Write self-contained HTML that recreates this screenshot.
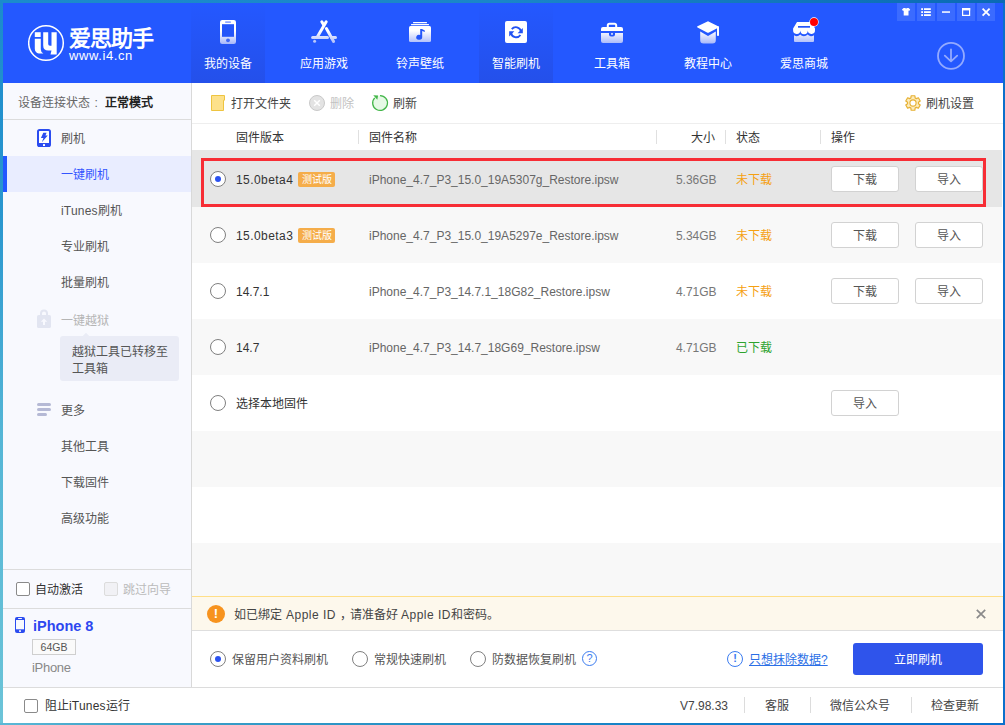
<!DOCTYPE html>
<html lang="zh-CN">
<head>
<meta charset="utf-8">
<title>i4</title>
<style>
html,body{margin:0;padding:0;}
body{width:1005px;height:725px;position:relative;overflow:hidden;background:#0b6fcb;font-family:"Liberation Sans",sans-serif;font-size:12px;color:#333;line-height:16px;}
div,span,a{box-sizing:border-box;}
.abs{position:absolute;}
.t{margin-top:1px;position:absolute;white-space:nowrap;line-height:16px;height:16px;}
#bl{left:0;top:0;width:3px;height:725px;background:linear-gradient(#1b8bcc 0%,#2a97cf 30%,#55b6d6 60%,#6cc4d8 100%);}
#bt{left:0;top:0;width:1005px;height:3px;background:linear-gradient(90deg,#1b8bcc 0%,#1a86c8 50%,#0a6ab4 100%);}
#win{left:3px;top:3px;width:1000px;height:720px;background:#fff;}
#hdr{left:0;top:0;width:1000px;height:80px;background:#2458ff;}
.tab{position:absolute;top:0;width:74px;height:80px;background:linear-gradient(#2458ff 0%,#2450ea 100%);}
.nt{position:absolute;top:53px;width:96px;text-align:center;color:#fff;font-size:12px;line-height:16px;}
.wb{position:absolute;top:0;width:18px;height:18px;background:#3b6bff;}
#side{left:0;top:80px;width:188px;height:604px;background:#f8f9fe;}
#sideb{left:188px;top:80px;width:1px;height:604px;background:#d9d9d9;}
.si{margin-top:1px;position:absolute;left:58px;color:#555;font-size:12px;line-height:16px;white-space:nowrap;}
.hl{position:absolute;left:0;width:188px;height:1px;background:#dcdcdc;}
.row{position:absolute;left:189px;width:810px;}
.cell{margin-top:1px;position:absolute;white-space:nowrap;line-height:16px;font-size:12px;}
.radio{position:absolute;width:16px;height:16px;border-radius:50%;border:1px solid #808080;background:#fff;}
.radio.on::after{content:"";position:absolute;left:4px;top:4px;width:6px;height:6px;border-radius:50%;background:#2b52f0;}
.btn{position:absolute;width:68px;height:26px;border:1px solid #d2d2d2;border-radius:3px;background:#fff;color:#555;text-align:center;line-height:26px;font-size:12px;}
.tag{position:absolute;height:14.5px;width:37px;background:#f5ad4a;color:#fff;border-radius:2px;font-size:10px;line-height:16px;text-align:center;}
.vs{position:absolute;width:1px;background:#e0e0e0;}
.cb{position:absolute;width:14px;height:14px;border:1px solid #8a8a8a;border-radius:2px;background:#fff;}
</style>
</head>
<body>
<div id="bl" class="abs"></div>
<div id="bt" class="abs"></div>
<div class="abs" style="left:0;top:723px;width:1005px;height:2px;background:linear-gradient(90deg,#5cb9d7 0%,#3fa3c8 12%,#1e8ac4 50%,#0b76cc 85%,#0b70cc 100%)"></div>
<div id="win" class="abs">
  <div id="hdr" class="abs">
    <!-- tabs -->
    <div class="tab" style="left:188px"></div>
    <div class="tab" style="left:476px"></div>
    <!-- logo -->
    <svg class="abs" style="left:25px;top:21px" width="38" height="38" viewBox="0 0 38 38">
      <circle cx="18" cy="19" r="17.3" fill="none" stroke="#fff" stroke-width="1.5"/>
      <path d="M6.8 8.2h5.9v4.8h-5.900z" fill="#fff"/>
      <path d="M6.800 14.8h6v10.4q0 3.2 2.6 4.4h-4.600q-4 -0.800 -4 -5z" fill="#fff"/>
      <path d="M15.2 8.2h5v11.8q0 1.800 1.800 1.8h1.500v-13.6h5.2v22.2h-6.2l1 -4h-3.300q-5 0 -5 -5z" fill="#fff"/>
    </svg>
    <div class="t" style="left:66px;top:22px;font-size:22px;line-height:26px;height:26px;color:#fff;font-weight:bold;letter-spacing:-1px">爱思助手</div>
    <div class="t" style="left:66px;top:44px;font-size:13px;color:#fff;letter-spacing:0.6px">www.i4.cn</div>
    <!-- nav text -->
    <div class="nt" style="left:177px">我的设备</div>
    <div class="nt" style="left:273px">应用游戏</div>
    <div class="nt" style="left:369px">铃声壁纸</div>
    <div class="nt" style="left:465px">智能刷机</div>
    <div class="nt" style="left:561px">工具箱</div>
    <div class="nt" style="left:657px">教程中心</div>
    <div class="nt" style="left:753px">爱思商城</div>

    <svg class="abs" style="left:0;top:0" width="1000" height="80" viewBox="3 3 1000 80">
      <defs>
        <linearGradient id="g" x1="0" y1="0" x2="0" y2="1" gradientUnits="userSpaceOnUse" >
          <stop offset="0" stop-color="#fff"/><stop offset="0.4" stop-color="#fff"/><stop offset="1" stop-color="#a9b9fa"/>
        </linearGradient>
        <linearGradient id="gv" x1="0" y1="20" x2="0" y2="44" gradientUnits="userSpaceOnUse">
          <stop offset="0" stop-color="#fff"/><stop offset="0.45" stop-color="#fff"/><stop offset="1" stop-color="#a6b7fa"/>
        </linearGradient>
      </defs>
      <!-- phone -->
      <rect x="220" y="20" width="16" height="24" rx="2.2" fill="url(#gv)"/>
      <rect x="222" y="24.2" width="12" height="12.6" fill="#2456fa"/>
      <rect x="225" y="21.3" width="6" height="1.7" rx="0.8" fill="#8fa7ff"/>
      <circle cx="228" cy="40.3" r="1.9" fill="#3f68f6"/>
      <!-- appstore -->
      <g stroke="url(#gv)" stroke-width="3" stroke-linecap="round" fill="none">
        <path d="M326.2 21.8L317.6 36.4"/>
        <path d="M321.8 21.8L323.6 24.8"/>
        <path d="M326.4 28.6L333.6 41.4"/>
        <path d="M312.6 37.6H327.5"/>
        <path d="M331.5 37.6H335.5"/>
      </g>
      <circle cx="314.6" cy="41.3" r="1.5" fill="#b9c7fb"/>
      <!-- music -->
      <rect x="413" y="22" width="14" height="1.2" rx="0.5" fill="#fff"/>
      <rect x="411" y="24" width="18" height="1.2" rx="0.5" fill="#fff"/>
      <rect x="409" y="26" width="22" height="16" rx="1.5" fill="url(#gv)"/>
      <path d="M420.2 29h1.8l2.8 1.6v1.4l-2.6-1v6.2a3 2.4 0 1 1 -2-2.2z" fill="#2456fa"/>
      <!-- refresh -->
      <rect x="505" y="21" width="22" height="22" rx="2" fill="#fff"/>
      <g fill="none" stroke="#2152f3" stroke-width="1.9">
        <path d="M511.8 29.2A5.2 5.2 0 0 1 521 31.4"/>
        <path d="M520.4 35A5.2 5.2 0 0 1 511 33"/>
      </g>
      <path d="M522.8 28v5.2h-5.2z" fill="#2152f3"/>
      <path d="M509.2 36.4v-5.2h5.2z" fill="#2152f3"/>
      <!-- toolbox -->
      <path d="M607.8 27v-1.6a1.6 1.6 0 0 1 1.6-1.6h5.2a1.6 1.6 0 0 1 1.6 1.6V27" fill="none" stroke="#fff" stroke-width="2"/>
      <path d="M601 31v-2a2 2 0 0 1 2-2h18a2 2 0 0 1 2 2v2z" fill="#fff"/>
      <path d="M601 33h22v8a2 2 0 0 1 -2 2h-18a2 2 0 0 1 -2-2z" fill="url(#gv)"/>
      <path d="M609 31h6v3.5a2 2 0 0 1 -2 2h-2a2 2 0 0 1 -2-2z" fill="#2456fa"/>
      <rect x="611.2" y="33" width="1.6" height="1.8" rx="0.5" fill="#fff"/>
      <!-- cap -->
      <path d="M700.2 31.5v8.7a3.3 3.3 0 0 0 3.3 3.3h9a3.3 3.3 0 0 0 3.3-3.3v-8.7l-7.8 4.4z" fill="url(#gv)"/>
      <path d="M708 21.2l10.6 5.2a0.6 0.6 0 0 1 0 1l-10.1 5.3a1 1 0 0 1 -1 0l-10-5.2a0.7 0.7 0 0 1 0-1.2z" fill="#fff"/>
      <rect x="717" y="26.5" width="2" height="9.3" fill="#fff"/>
      <!-- store -->
      <path d="M797 22h14.5l3.5 6.5v1.5a3.6 3.6 0 0 1 -7.2 0.6a3.7 3.7 0 0 1 -7.4 0a3.6 3.6 0 0 1 -7.3 -0.6v-1.5z" fill="#fff"/>
      <rect x="798" y="26" width="12" height="1.7" fill="#2456fa"/>
      <path d="M794 35.2a4.6 4.6 0 0 0 6.2-0.6a4.8 4.8 0 0 0 7.4 0a4.6 4.6 0 0 0 6.4 0.6v5.8a1 1 0 0 1 -1 1h-18a1 1 0 0 1 -1-1z" fill="url(#gv)"/>
      <circle cx="814" cy="22" r="4.7" fill="#fff"/>
      <circle cx="814" cy="22" r="4" fill="#ff0000"/>
    </svg>
    <!-- window buttons -->
    <div class="wb" style="left:894px"></div>
    <div class="wb" style="left:914px"></div>
    <div class="wb" style="left:934px"></div>
    <div class="wb" style="left:954px"></div>
    <div class="wb" style="left:974px"></div>

    <svg class="abs" style="left:894px;top:0" width="98" height="18" viewBox="897 3 98 18">
      <g fill="#fff">
        <path d="M903.6 8h1.7a1 1 0 0 0 1.6 0h1.7l1.6 1.6-1 1.4-.7-.5v5.1h-4.8v-5.1l-.7.5-1-1.4z"/>
        <rect x="921.2" y="8.2" width="1.8" height="1.8"/><rect x="924" y="8.2" width="6.8" height="1.8"/>
        <rect x="921.2" y="11.2" width="1.8" height="1.8"/><rect x="924" y="11.2" width="6.8" height="1.8"/>
        <rect x="921.2" y="14.2" width="1.8" height="1.8"/><rect x="924" y="14.2" width="6.8" height="1.8"/>
        <rect x="942" y="11.3" width="8" height="1.5"/>
      </g>
      <rect x="962.6" y="8.6" width="7" height="6.8" fill="none" stroke="#fff" stroke-width="1.2"/>
      <rect x="962" y="8" width="8.2" height="2.4" fill="#fff"/>
      <path d="M982.6 8.6l7 7M989.6 8.6l-7 7" stroke="#fff" stroke-width="1.8" fill="none"/>
    </svg>
    <svg class="abs" style="left:933px;top:38px" width="30" height="30" viewBox="936 41 30 30">
      <circle cx="951" cy="55.9" r="13" fill="none" stroke="#93aaff" stroke-width="1.8"/>
      <path d="M951 49.300V61M944.800 55.600l6.200 5.800 6.200-5.800" fill="none" stroke="#93aaff" stroke-width="1.8" stroke-linecap="round" stroke-linejoin="round"/>
    </svg>
  </div>

  <!-- SIDEBAR -->
  <div id="side" class="abs">
    <div class="t" style="left:15px;top:11px;color:#666">设备连接状态<span style="margin-left:4.500px">:</span></div>
    <div class="t" style="left:102px;top:11px;color:#222;font-weight:bold">正常模式</div>
    <div class="hl" style="top:36px"></div>
    <div class="abs" style="left:0;top:73px;width:188px;height:36px;background:#e9edff"></div>
    <div class="abs" style="left:0;top:73px;width:4px;height:36px;background:#2458ff"></div>
    <div class="si" style="top:47px">刷机</div>
    <div class="si" style="top:83px;color:#3355ff">一键刷机</div>
    <div class="si" style="top:119px"><span style="letter-spacing:0.2px">iTunes</span>刷机</div>
    <div class="si" style="top:155px">专业刷机</div>
    <div class="si" style="top:191px">批量刷机</div>
    <div class="si" style="top:229px;color:#b5b5b5">一键越狱</div>
    <div class="abs" style="left:57px;top:253px;width:119px;height:45px;background:#eaecf6;border-radius:3px"></div>
    <div class="abs" style="left:79.5px;top:250.5px;width:6px;height:6px;background:#eaecf6;transform:rotate(45deg)"></div>
    <div class="t" style="left:69px;top:260px;color:#555">越狱工具已转移至</div>
    <div class="t" style="left:69px;top:277px;color:#555">工具箱</div>
    <div class="si" style="top:319px">更多</div>
    <div class="si" style="top:355px">其他工具</div>
    <div class="si" style="top:391px">下载固件</div>
    <div class="si" style="top:427px">高级功能</div>

    <svg class="abs" style="left:0;top:0" width="188" height="604" viewBox="3 83 188 604">
      <!-- flash -->
      <rect x="38" y="130" width="12" height="16" rx="1.6" fill="#fff" stroke="#2b4cf0" stroke-width="2"/>
      <rect x="38" y="143" width="12" height="3.5" fill="#2b4cf0"/>
      <rect x="43" y="144.1" width="2" height="1.9" fill="#fff"/>
      <path d="M43.4 133.4h2.8l-1 2.4h2l-5 5.8 1.3-3.7h-2.1z" fill="#2b4cf0" transform="translate(44 137.3) scale(1.18) translate(-44 -137.3)"/>
      <!-- lock -->
      <path d="M41 315.5v-2a3 3 0 0 1 6 0v2" fill="none" stroke="#e2e5f1" stroke-width="2"/>
      <rect x="37" y="315" width="14" height="13" rx="1.6" fill="#e2e5f1"/>
      <path d="M44 318.4l3.2 3.3h-2.2v3.3h-2v-3.3h-2.2z" fill="#f8f9fe"/>
      <!-- more -->
      <rect x="37" y="403" width="14" height="3" rx="1.5" fill="#b5b9d5"/>
      <rect x="37" y="408" width="14" height="3" rx="1.5" fill="#b5b9d5"/>
      <rect x="37" y="413" width="10" height="3" rx="1.5" fill="#b5b9d5"/>
      <!-- phone small -->
      <rect x="15" y="617" width="10" height="16" rx="2" fill="#2b4cf0"/>
      <rect x="16" y="620" width="8" height="9.3" fill="#f8f9fe"/>
      <rect x="18" y="618.1" width="4" height="1" rx="0.5" fill="#f8f9fe"/>
      <rect x="19" y="630.2" width="2" height="1.8" fill="#dfe4fb"/>
    </svg>
    <div class="hl" style="top:486px"></div>
    <div class="cb" style="left:13px;top:499px"></div>
    <div class="t" style="left:32px;top:498px;color:#333">自动激活</div>
    <div class="cb" style="left:101px;top:499px;border-color:#dcdcdc;background:#f1f1f5"></div>
    <div class="t" style="left:120px;top:498px;color:#bbb">跳过向导</div>
    <div class="hl" style="top:525px"></div>
    <div class="t" style="left:30px;top:533px;font-size:14.5px;line-height:18px;height:18px;font-weight:bold;color:#2d47f0">iPhone 8</div>
    <div class="abs" style="left:29px;top:556px;width:44px;height:16px;border:1px solid #cfcfcf;background:#fafafa;font-size:10.5px;line-height:14px;text-align:center;color:#555">64GB</div>
    <div class="t" style="left:29px;top:576px;color:#888;font-size:13px;letter-spacing:-0.3px">iPhone</div>
  </div>
  <div id="sideb" class="abs"></div>

  <!-- MAIN -->
  <div class="abs" style="left:189px;top:80px;width:811px;height:40px;background:#fff"></div>
  <div class="abs" style="left:189px;top:120px;width:811px;height:1px;background:#eeeeee"></div>
  <!-- toolbar -->
  <div class="t" style="left:228px;top:92px;color:#444">打开文件夹</div>
  <div class="t" style="left:327px;top:92px;color:#c2c2c2">删除</div>
  <div class="t" style="left:390px;top:92px;color:#444">刷新</div>
  <div class="t" style="left:923px;top:92px;color:#444">刷机设置</div>

  <svg class="abs" style="left:189px;top:80px" width="811" height="40" viewBox="192 83 811 40">
    <!-- folder -->
    <path d="M211.5 95.5h13v4.7h-1v10.3h-12z" fill="#fde18b" stroke="#eec440" stroke-width="1"/>
    <!-- delete -->
    <circle cx="317" cy="103" r="7.5" fill="#e3e3e3" stroke="#c9c9c9" stroke-width="1"/>
    <path d="M314.2 100.2l5.6 5.6M319.8 100.2l-5.6 5.6" stroke="#fff" stroke-width="1.5" fill="none"/>
    <!-- refresh -->
    <circle cx="380" cy="103" r="7.4" fill="#e6f9e6"/>
    <path d="M380 95.6A7.4 7.4 0 1 1 374.7 97.9" fill="none" stroke="#43b649" stroke-width="1.3"/>
    <path d="M373.3 95.2l4.8 0.4-0.8 4.2z" fill="#43b649"/>
    <!-- gear -->
    <g transform="translate(913 103)">
      <path d="M-2.14 -5.07 L-1.86 -7.27 L1.86 -7.27 L2.14 -5.07 L3.32 -4.39 L5.37 -5.24 L7.22 -2.03 L5.46 -0.68 L5.46 0.68 L7.22 2.03 L5.37 5.24 L3.32 4.39 L2.14 5.07 L1.86 7.27 L-1.86 7.27 L-2.14 5.07 L-3.32 4.39 L-5.37 5.24 L-7.22 2.03 L-5.46 0.68 L-5.46 -0.68 L-7.22 -2.03 L-5.37 -5.24 L-3.32 -4.39Z" fill="#fdebbb" stroke="#e6b133" stroke-width="1.2" stroke-linejoin="round"/>
      <circle r="3.1" fill="#fff" stroke="#e6b133" stroke-width="1.1"/>
    </g>
  </svg>
  <!-- table header -->
  <div class="t" style="left:233px;top:126px;color:#333">固件版本</div>
  <div class="t" style="left:366px;top:126px;color:#333">固件名称</div>
  <div class="t" style="left:688px;top:126px;color:#333">大小</div>
  <div class="t" style="left:733px;top:126px;color:#333">状态</div>
  <div class="t" style="left:828px;top:126px;color:#333">操作</div>
  <div class="vs" style="left:355px;top:127px;height:14px"></div>
  <div class="vs" style="left:653px;top:127px;height:14px"></div>
  <div class="vs" style="left:722px;top:127px;height:14px"></div>
  <div class="vs" style="left:817px;top:127px;height:14px"></div>

  <!-- rows -->
  <div class="row" style="top:147px;height:57px;background:#e6e6e6"></div>
  <div class="row" style="top:204px;height:56px;background:#f8f8f8"></div>
  <div class="row" style="top:260px;height:56px;background:#fff"></div>
  <div class="row" style="top:316px;height:56px;background:#f8f8f8"></div>
  <div class="row" style="top:372px;height:56px;background:#fff"></div>
  <div class="row" style="top:428px;height:56px;background:#f8f8f8"></div>
  <div class="row" style="top:484px;height:56px;background:#fff"></div>
  <div class="row" style="top:540px;height:53px;background:#f8f8f8"></div>
  <div class="abs" style="left:198px;top:155px;width:785px;height:49px;border:3px solid #f72d35"></div>

  <!-- row 1 -->
  <div class="radio on" style="left:207px;top:168px"></div>
  <div class="cell" style="left:233px;top:168px;color:#333;letter-spacing:0.43px">15.0beta4</div>
  <div class="tag" style="left:295px;top:169px">测试版</div>
  <div class="cell" style="left:366px;top:168px;color:#666">iPhone_4.7_P3_15.0_19A5307g_Restore.ipsw</div>
  <div class="cell" style="right:286.4px;top:168px;color:#777">5.36GB</div>
  <div class="cell" style="left:733px;top:168px;color:#f5a012">未下载</div>
  <div class="btn" style="left:828px;top:163px">下载</div>
  <div class="btn" style="left:912px;top:163px">导入</div>
  <!-- row 2 -->
  <div class="radio" style="left:207px;top:224px"></div>
  <div class="cell" style="left:233px;top:224px;color:#333;letter-spacing:0.43px">15.0beta3</div>
  <div class="tag" style="left:295px;top:225px">测试版</div>
  <div class="cell" style="left:366px;top:224px;color:#666">iPhone_4.7_P3_15.0_19A5297e_Restore.ipsw</div>
  <div class="cell" style="right:286.4px;top:224px;color:#777">5.34GB</div>
  <div class="cell" style="left:733px;top:224px;color:#f5a012">未下载</div>
  <div class="btn" style="left:828px;top:219px">下载</div>
  <div class="btn" style="left:912px;top:219px">导入</div>
  <!-- row 3 -->
  <div class="radio" style="left:207px;top:280px"></div>
  <div class="cell" style="left:233px;top:280px;color:#333">14.7.1</div>
  <div class="cell" style="left:366px;top:280px;color:#666">iPhone_4.7_P3_14.7.1_18G82_Restore.ipsw</div>
  <div class="cell" style="right:286.4px;top:280px;color:#777">4.71GB</div>
  <div class="cell" style="left:733px;top:280px;color:#f5a012">未下载</div>
  <div class="btn" style="left:828px;top:275px">下载</div>
  <div class="btn" style="left:912px;top:275px">导入</div>
  <!-- row 4 -->
  <div class="radio" style="left:207px;top:336px"></div>
  <div class="cell" style="left:233px;top:336px;color:#333">14.7</div>
  <div class="cell" style="left:366px;top:336px;color:#666">iPhone_4.7_P3_14.7_18G69_Restore.ipsw</div>
  <div class="cell" style="right:286.4px;top:336px;color:#777">4.71GB</div>
  <div class="cell" style="left:733px;top:336px;color:#2da32d">已下载</div>
  <!-- row 5 -->
  <div class="radio" style="left:207px;top:392px"></div>
  <div class="cell" style="left:233px;top:392px;color:#333">选择本地固件</div>
  <div class="btn" style="left:828px;top:387px">导入</div>

  <!-- notice -->
  <div class="abs" style="left:189px;top:593px;width:811px;height:1px;background:#ffdf88"></div>
  <div class="abs" style="left:189px;top:594px;width:811px;height:33px;background:#fdf8ec"></div>
  <div class="abs" style="left:189px;top:627px;width:811px;height:1px;background:#dedede"></div>
  <div class="abs" style="left:204px;top:602px;width:18px;height:18px;border-radius:50%;background:#f7931e;color:#fff;font-weight:bold;font-size:13px;line-height:18px;text-align:center">!</div>
  <div class="t" style="left:231px;top:603px;color:#444">如已绑定</div>
  <div class="t" style="left:283px;top:603px;color:#444;letter-spacing:0.5px">Apple ID</div>
  <div class="t" style="left:336.5px;top:603px;color:#444">，</div>
  <div class="t" style="left:346.5px;top:603px;color:#444">请准备好</div>
  <div class="t" style="left:398px;top:603px;color:#444;letter-spacing:0.5px">Apple ID</div>
  <div class="t" style="left:447.5px;top:603px;color:#444">和密码。</div>

  <svg class="abs" style="left:972px;top:605px" width="12" height="12" viewBox="0 0 12 12"><path d="M1.8 1.8l8.4 8.4M10.2 1.8l-8.4 8.4" stroke="#8a8a8a" stroke-width="1.7" fill="none"/></svg>

  <!-- options -->
  <div class="radio on" style="left:207px;top:648px"></div>
  <div class="t" style="left:229px;top:648px;color:#555">保留用户资料刷机</div>
  <div class="radio" style="left:349px;top:648px"></div>
  <div class="t" style="left:371px;top:648px;color:#555">常规快速刷机</div>
  <div class="radio" style="left:467px;top:648px"></div>
  <div class="t" style="left:489px;top:648px;color:#555">防数据恢复刷机</div>

  <div class="abs" style="left:579px;top:648px;width:15px;height:15px;border:1.4px solid #3b7cf0;border-radius:50%;color:#3b7cf0;font-size:11px;line-height:12.5px;text-align:center">?</div>
  <div class="abs" style="left:724px;top:648px;width:16px;height:16px;border:1.5px solid #3b7cf0;border-radius:50%;color:#3b7cf0;font-size:11px;font-weight:bold;line-height:13px;text-align:center">!</div>
  <div class="t" style="left:746px;top:648px;color:#2b6fe6;text-decoration:underline">只想抹除数据?</div>
  <div class="abs" style="left:850px;top:640px;width:130px;height:32px;border-radius:3px;background:#2f54eb;color:#fff;text-align:center;line-height:34px;font-size:12px">立即刷机</div>

  <!-- footer -->
  <div class="abs" style="left:0;top:684px;width:1000px;height:1px;background:#dcdcdc"></div>
  <div class="cb" style="left:21px;top:696px"></div>
  <div class="t" style="left:42px;top:694px;color:#333">阻止<span style="letter-spacing:0.2px">iTunes</span>运行</div>
  <div class="t" style="left:677px;top:694px;color:#444">V7.98.33</div>
  <div class="t" style="left:762px;top:694px;color:#444">客服</div>
  <div class="t" style="left:827px;top:694px;color:#444">微信公众号</div>
  <div class="t" style="left:928px;top:694px;color:#444">检查更新</div>
  <div class="vs" style="left:741px;top:694px;height:16px;background:#dcdcdc"></div>
  <div class="vs" style="left:807px;top:694px;height:16px;background:#dcdcdc"></div>
  <div class="vs" style="left:908px;top:694px;height:16px;background:#dcdcdc"></div>
</div>
</body>
</html>
